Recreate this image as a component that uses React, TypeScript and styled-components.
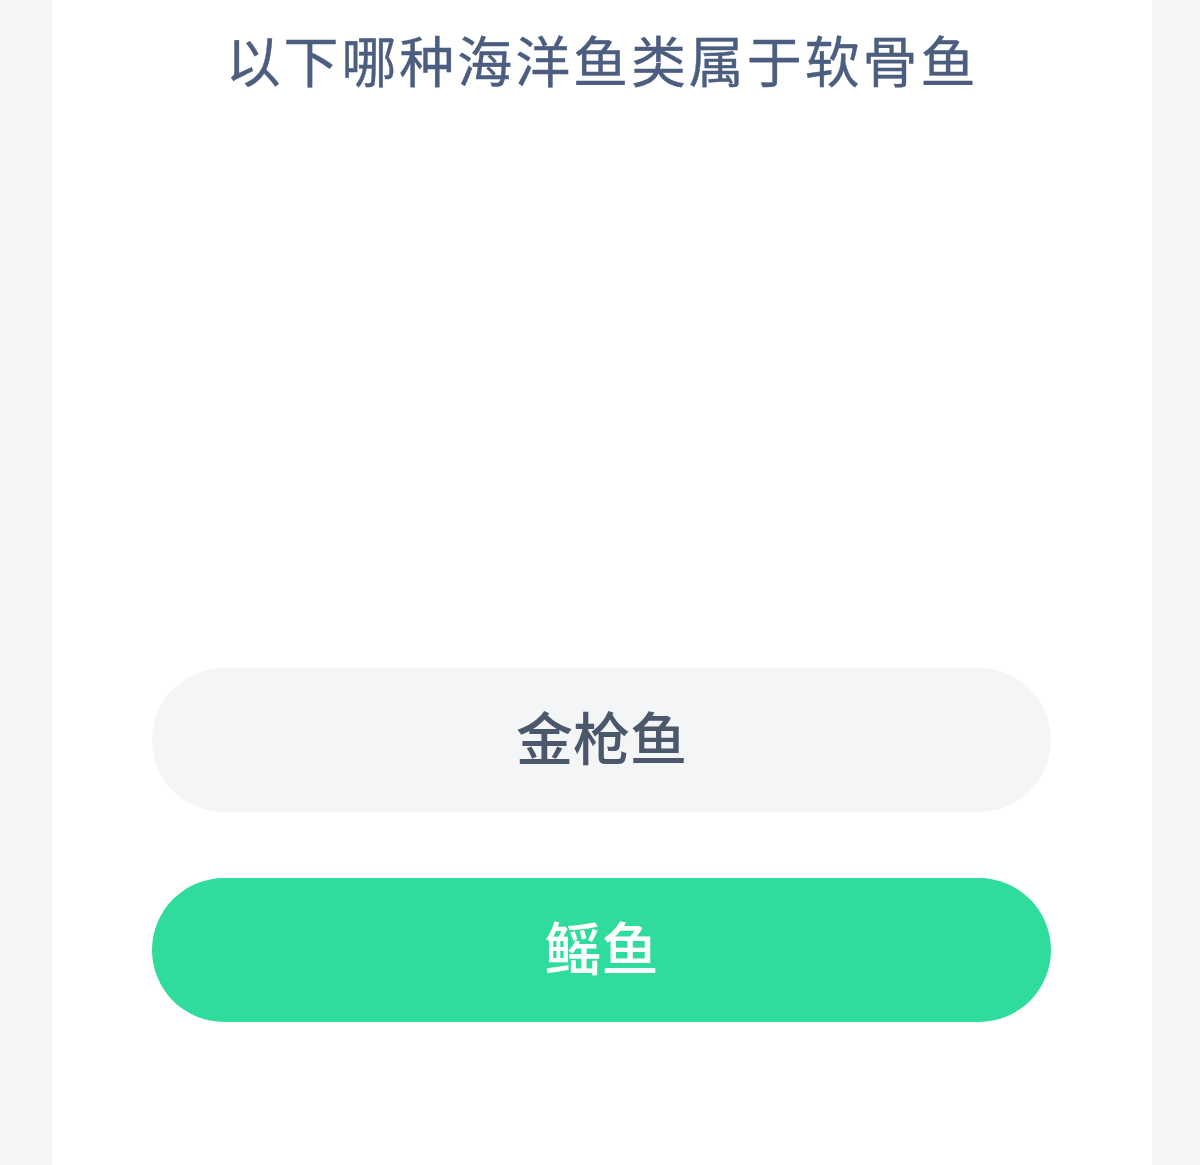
import React from "react";
import styled, { createGlobalStyle } from "styled-components";

const Global = createGlobalStyle`
  html, body { margin: 0; padding: 0; background: #f5f5f5; }
  body { font-family: "Noto Sans CJK SC", "Noto Sans", sans-serif; }
`;

const Page = styled.div`
  display: flex;
  justify-content: center;
  min-height: 1165px;
  background: #f5f5f5;
`;

const Card = styled.main`
  width: 1100px;
  margin-left: 4px;
  min-height: 1165px;
  background: #ffffff;
  display: flex;
  flex-direction: column;
  padding-top: 25px;
  box-sizing: border-box;
`;

const Title = styled.h1`
  margin: 0;
  text-align: center;
  font-size: 55px;
  line-height: 66px;
  font-weight: 400;
  letter-spacing: 2.9px;
  color: #4c5e80;
  -webkit-text-stroke: 0.4px #4c5e80;
`;

const Options = styled.div`
  margin-top: 577px;
  padding: 0 101px 0 100px;
  display: flex;
  flex-direction: column;
  gap: 66px;
`;

const Option = styled.button<{ $selected?: boolean }>`
  height: 144px;
  padding: 0 0 10px;
  border: none;
  border-radius: 72px;
  background: ${(p) => (p.$selected ? "#30dc9b" : "#f4f5f7")};
  color: ${(p) => (p.$selected ? "#ffffff" : "#4b586b")};
  font-family: "Noto Sans CJK SC", "Noto Sans", sans-serif;
  font-size: 57px;
  font-weight: 500;
  letter-spacing: 0;
  display: flex;
  align-items: center;
  justify-content: center;
  cursor: pointer;
`;

export default function App() {
  return (
    <>
      <Global />
      <Page>
        <Card>
          <Title>以下哪种海洋鱼类属于软骨鱼</Title>
          <Options>
            <Option>金枪鱼</Option>
            <Option $selected>鳐鱼</Option>
          </Options>
        </Card>
      </Page>
    </>
  );
}
